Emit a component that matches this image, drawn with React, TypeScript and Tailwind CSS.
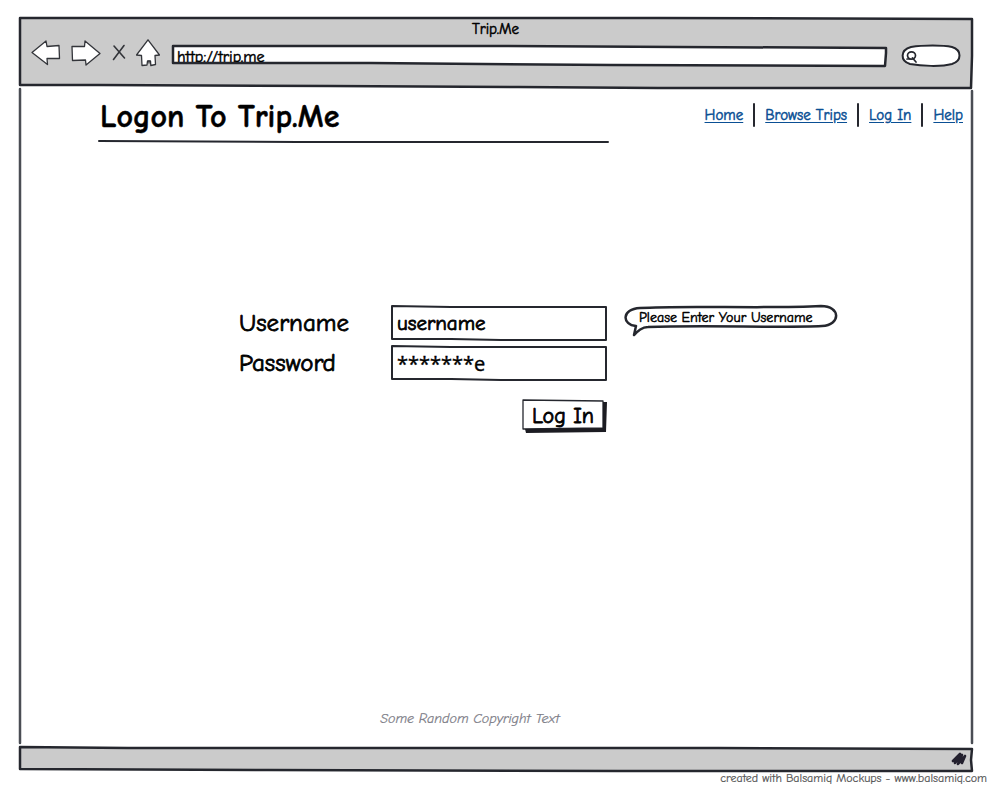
import type { ReactNode } from "react";

const INK = "#25272e";

type SketchProps = {
  box: string;
  d: string;
  fill?: string;
  stroke?: number;
  color?: string;
  children?: ReactNode;
};

/* Hand-drawn outline that stretches with the element it decorates. */
function Sketch({ box, d, fill = "none", stroke = 2, color = INK, children }: SketchProps) {
  return (
    <svg
      aria-hidden="true"
      viewBox={box}
      preserveAspectRatio="none"
      className="pointer-events-none absolute inset-0 h-full w-full overflow-visible"
    >
      <path
        d={d}
        fill={fill}
        stroke={color}
        strokeWidth={stroke}
        strokeLinecap="round"
        strokeLinejoin="round"
        vectorEffect="non-scaling-stroke"
      />
      {children}
    </svg>
  );
}

function NavIcon({ label, width, height, children }: { label: string; width: number; height: number; children: ReactNode }) {
  return (
    <button type="button" aria-label={label} className="shrink-0">
      <svg
        width={width}
        height={height}
        viewBox={`0 0 ${width} ${height}`}
        fill="#fff"
        stroke="#33353a"
        strokeWidth="1.3"
        strokeLinejoin="round"
        strokeLinecap="round"
      >
        {children}
      </svg>
    </button>
  );
}

function BrowserBar() {
  return (
    <header className="relative h-[72px] shrink-0">
      <Sketch
        box="0 0 955 72"
        fill="#cbcbcb"
        stroke={2.5}
        d="M2 2 L150 2 L400 2 L640 2 L954 3 L954 40 L953 72 L640 72 L500 71 L312 70 L80 69 L2 69 L2 30 Z"
      />
      <div className="relative flex h-full flex-col">
        <div className="pt-[3px] text-center text-[15px] leading-5">Trip.Me</div>
        <div className="flex items-center pr-3 pl-[13px]">
          <div className="flex items-center pb-[2px]">
            <NavIcon label="Back" width={30} height={28}>
              <path d="M1 12.5 L15 1 L16 6.5 L28 5.5 L28.5 18.5 L16 18.5 L16.5 24.5 Z" />
            </NavIcon>
            <span className="w-[10px]" />
            <NavIcon label="Forward" width={30} height={28}>
              <path d="M1 6.5 L13.5 6.5 L14 1 L29 13.5 L15 25 L14.5 20 L1.5 20.5 Z" />
            </NavIcon>
            <span className="w-[11px]" />
            <NavIcon label="Stop" width={14} height={28}>
              <path d="M2 6 L12.5 18 M12 5.5 L1.5 19.5" fill="none" strokeWidth="1.6" />
            </NavIcon>
            <span className="w-[10px]" />
            <NavIcon label="Home" width={24} height={30}>
              <path d="M12 0.8 L23.5 16 L19 16.5 L19.5 25.5 L14.8 26.5 L14.5 22 L11.5 22 L11 26 L6 26.5 L5.5 16.5 L0.5 16 Z" />
              <path d="M13 22 L13 24" />
            </NavIcon>
          </div>
          <div className="relative mt-[2px] ml-[11px] h-[22px] min-w-0 flex-1">
            <Sketch
              box="0 0 716 22"
              fill="#fff"
              stroke={2.5}
              d="M2 1 L320 1 L715 3 L715 8 L714 21 L440 20 L200 18 L2 18 Z"
            />
            <div className="relative h-[17px] overflow-hidden">
              <input
                aria-label="Address"
                defaultValue="http://trip.me"
                className="block h-6 w-full bg-transparent pl-[6px] text-base leading-6 outline-none [-webkit-text-stroke:inherit]"
              />
            </div>
          </div>
          <div className="relative mt-[2px] ml-[14px] h-[22px] w-[60px]">
            <Sketch
              box="0 0 60 22"
              fill="#fff"
              d="M10 2 C22 0 42 0 51 2 C61 5 61 16 51 19 C40 22 20 21 9 19 C-1 16 -1 5 10 2 Z"
            >
              <g fill="none" stroke={INK} strokeWidth="1.7" strokeLinecap="round">
                <ellipse cx="10.5" cy="10.5" rx="4" ry="3.6" />
                <path d="M6 14 L9 14 M11.5 13 L15 17" />
              </g>
            </Sketch>
            <input aria-label="Search" className="relative block h-full w-full bg-transparent pr-3 pl-5 text-xs outline-none" />
          </div>
        </div>
      </div>
    </header>
  );
}

const links = ["Home", "Browse Trips", "Log In", "Help"];

function SiteNav() {
  return (
    <nav className="pt-[15px]">
      <ul className="flex">
        {links.map((text, i) => (
          <li key={text} className="relative flex h-6 items-center pl-[11px] text-[15px] not-last:pr-[11px]">
            {i > 0 && <Sketch box="0 0 100 24" d="M0 1 L0 12 L0 23" />}
            <a href="#" className="text-[#0a4f94] underline underline-offset-2">
              {text}
            </a>
          </li>
        ))}
      </ul>
    </nav>
  );
}

function TextField({ id, value, className }: { id: string; value: string; className: string }) {
  return (
    <div className="relative h-9">
      <Sketch box="0 0 216 36" fill="#fff" d="M1 1 L60 2 L215 2 L215 35 L110 35 L60 34 L1 34 Z" />
      <input
        id={id}
        defaultValue={value}
        className={`relative block h-full w-full bg-transparent px-[6px] outline-none ${className}`}
      />
    </div>
  );
}

function LoginForm() {
  return (
    <form className="grid grid-cols-[152px_216px_auto] items-center justify-start gap-y-1 pl-[221px]">
      <label htmlFor="username" className="text-[25px] leading-9 [-webkit-text-stroke:0.8px]">
        Username
      </label>
      <TextField id="username" value="username" className="text-[21px] [-webkit-text-stroke:0.8px]" />
      <div role="tooltip" className="relative ml-[17px] h-8 w-[214px] self-start pt-px pl-[15px]">
        <Sketch
          box="0 0 214 32"
          fill="#fff"
          stroke={2.5}
          d="M16 3 C60 0 140 4 197 1 C217 1 217 20 198 21 C160 23 80 20 24 22 C18 22 14 26 10 30 L12 21 C-2 20 -3 4 16 3 Z"
        />
        <span className="relative block text-sm leading-6 whitespace-nowrap">Please Enter Your Username</span>
      </div>

      <label htmlFor="password" className="text-[25px] leading-9 [-webkit-text-stroke:0.8px]">
        Password
      </label>
      <TextField
        id="password"
        value="*******e"
        className="font-['Comic_Sans_MS','Open_Sans',sans-serif] text-xl font-medium [-webkit-text-stroke:0.4px]"
      />

      <div className="relative col-start-2 mt-[14px] h-[34px] w-[85px] justify-self-end">
        <Sketch box="0 0 85 34" fill="#fff" stroke={1.3} d="M1 1 L81 2 L81 29 L1 30 Z">
          <path d="M3 30 L81 29 L81 3 L85 3 L84 33 L4 34 Z" fill="#1c1c22" />
        </Sketch>
        <button type="submit" className="relative block h-[34px] w-[82px] text-[22px] [-webkit-text-stroke:0.8px]">
          Log In
        </button>
      </div>
    </form>
  );
}

function StatusBar() {
  return (
    <div className="relative h-[26px] shrink-0">
      <Sketch
        box="0 0 955 26"
        fill="#cbcbcb"
        stroke={2.5}
        d="M2 1 L110 2 L700 2 L954 3 L953 14 L954 25 L600 25 L250 24 L2 23 Z"
      />
      <svg aria-hidden="true" viewBox="0 0 18 16" className="absolute top-[5px] right-[5px] h-4 w-[18px]">
        <path
          d="M3 10 L10 3 L5 12 L12 4 L8 13 L15 5 L12 12"
          fill="none"
          stroke="#23202e"
          strokeWidth="2.6"
          strokeLinecap="round"
          strokeLinejoin="round"
        />
      </svg>
    </div>
  );
}

export default function App() {
  return (
    <div className="flex min-h-screen flex-col bg-white pt-4 font-['Comic_Sans_MS','Comic_Neue','Open_Sans',sans-serif] text-black [-webkit-text-stroke:0.5px]">
      <div className="mr-[17px] ml-[18px] flex flex-1 flex-col">
        <BrowserBar />
        <main className="relative flex flex-1 flex-col">
          <Sketch box="0 0 955 659" stroke={2.5} color="#4a4d54" d="M2 1 L2 656 M954 3 L954 656" />
          <div className="relative flex items-start justify-between pr-[10px] pl-20">
            <div className="relative h-14 w-[510px] pt-[9px]">
              <h1 className="pl-[2px] text-[32px] leading-10 font-bold">Logon To Trip.Me</h1>
              <Sketch box="0 0 510 56" d="M1 53 L200 54 L510 54" />
            </div>
            <SiteNav />
          </div>
          <div className="relative pt-[161px]">
            <LoginForm />
          </div>
          <p className="relative mt-auto pr-[51px] pb-[17px] text-center text-sm leading-5 text-[#7c7c86] italic [-webkit-text-stroke:0.2px]">
            Some Random Copyright Text
          </p>
        </main>
        <StatusBar />
      </div>
      <footer className="pr-[3px] pb-1 text-right text-xs leading-[13px] text-[#555] [-webkit-text-stroke:0.2px]">
        created with Balsamiq Mockups - www.balsamiq.com
      </footer>
    </div>
  );
}
